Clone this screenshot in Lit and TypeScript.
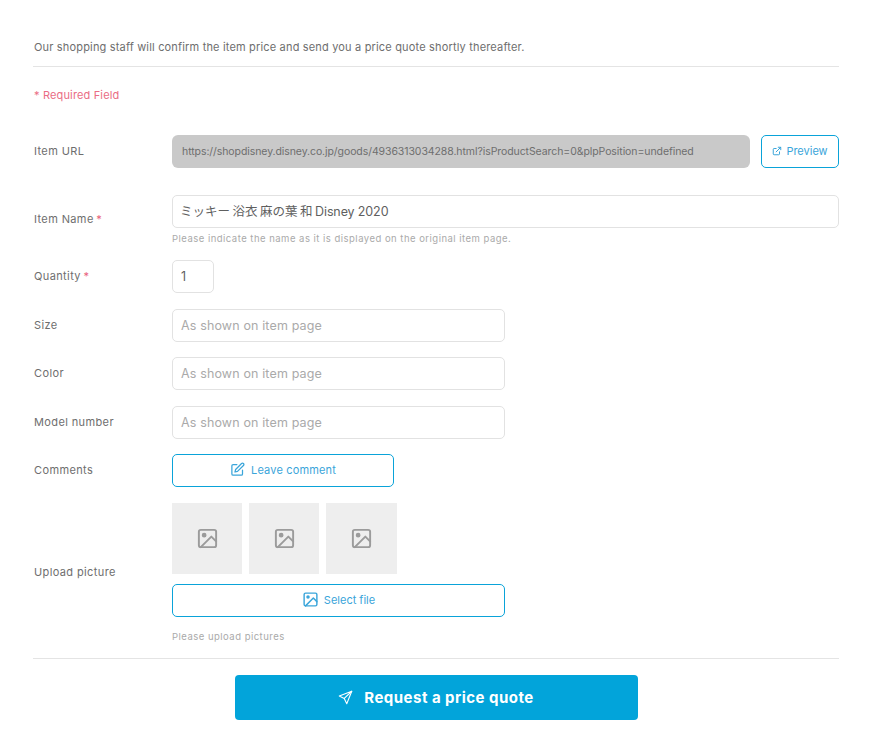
import { LitElement, html, css } from "lit";
import { customElement } from "lit/decorators.js";

const imageIcon = (size: number) => html`<svg width=${size} height=${size} viewBox="0 0 24 24" fill="none" stroke="currentColor" stroke-width="2" stroke-linecap="round" stroke-linejoin="round"><rect x="3" y="3" width="18" height="18" rx="2"></rect><circle cx="8.5" cy="8.5" r="1.5" fill="currentColor"></circle><path d="M21 15l-5-5L5 21"></path></svg>`;

@customElement("app-root")
export class AppRoot extends LitElement {
  static styles = css`
    :host {
      display: block;
      box-sizing: border-box;
      width: 875px;
      height: 751px;
      padding: 39px 36px 0 33px;
      background: #fff;
      font-family: Inter, "Noto Sans CJK JP", sans-serif;
      color: #666;
      overflow: hidden;
    }
    * { box-sizing: border-box; }
    .intro { font-size: 11px; line-height: 16px; letter-spacing: 0.17px; height: 27px; color: #6e6e6e; padding-left: 1px; }
    hr { border: 0; border-top: 1px solid #e4e4e4; margin: 0; }
    .req { margin-top: 20px; height: 16px; padding-left: 1px; font-size: 11px; line-height: 16px; letter-spacing: 0.15px; color: #ea6c84; }
    .row { display: grid; grid-template-columns: 139px 1fr; align-items: center; }
    .label { font-size: 11px; line-height: 16px; letter-spacing: 0.38px; color: #6e6e6e; padding-left: 1px; margin-top: -2px; }
    .star { color: #e8607a; margin-left: -1px; }
    .field {
      height: 33px; border: 1px solid #e2e2e2; border-radius: 5px; padding: 0 8px;
      font-size: 12.5px; line-height: 31px; color: #5f5f5f; background: #fff; white-space: nowrap;
    }
    .named { padding-left: 7px; }
    .cjk { word-spacing: -1px; }
    .latin { letter-spacing: -0.12px; }
    .ph { color: #aaa; letter-spacing: 0.14px; }
    .short { width: 333px; }
    .url-row { margin-top: 32px; }
    .url-line { display: flex; gap: 11px; }
    .url {
      flex: 1; height: 33px; background: #c9c9c9; border-radius: 6px; padding: 0 10px;
      font-size: 10.5px; line-height: 33px; color: #6e6e6e; white-space: nowrap; overflow: hidden; letter-spacing: -0.08px;
    }
    .btn {
      display: flex; align-items: center; justify-content: center; gap: 5px; height: 33px;
      border: 1px solid #0aa3d9; border-radius: 5px; background: #fff; color: #3aa5da; font-size: 11px; font-family: inherit; padding: 0 0 2px;
    }
    .preview { width: 78px; gap: 4px; }
    .comment { width: 222px; gap: 6px; letter-spacing: 0.15px; }
    .select { width: 333px; gap: 5px; margin-top: 10px; }
    .hint { font-size: 9.5px; line-height: 12px; color: #aaa; letter-spacing: 0.48px; }
    .name-row { margin-top: 27px; }
    .name-row .hint { margin-top: 5px; height: 12px; }
    .qty-row { margin-top: 15px; }
    .qty { width: 42px; }
    .size-row { margin-top: 16px; }
    .color-row { margin-top: 15px; }
    .model-row { margin-top: 16px; }
    .comment-row { margin-top: 15px; }
    .upload-row { margin-top: 16px; }
    .thumbs { display: flex; gap: 7px; }
    .thumb { width: 70px; height: 71px; background: #eee; color: #9b9b9b; display: flex; align-items: center; justify-content: center; }
    .thumb:last-child { width: 71px; }
    .upload-row .hint { margin-top: 14px; height: 12px; }
    .end { margin-top: 15px; }
    .submit-wrap { display: flex; justify-content: center; margin-top: 16px; }
    .submit {
      width: 403px; height: 45px; border: 0; border-radius: 4px; background: #02a4da; color: #fff;
      font-family: inherit; font-size: 15px; font-weight: 700; letter-spacing: 0.48px;
      display: flex; align-items: center; justify-content: center; gap: 11px; padding: 0;
    }
  `;

  render() {
    const ph = "As shown on item page";
    return html`
      <div class="intro">Our shopping staff will confirm the item price and send you a price quote shortly thereafter.</div>
      <hr />
      <div class="req">* Required Field</div>

      <div class="row url-row">
        <div class="label">Item URL</div>
        <div class="url-line">
          <div class="url">https://shopdisney.disney.co.jp/goods/4936313034288.html?isProductSearch=0&plpPosition=undefined</div>
          <button class="btn preview">
            <svg width="10" height="10" viewBox="0 0 24 24" fill="none" stroke="currentColor" stroke-width="2.4" stroke-linecap="round" stroke-linejoin="round"><path d="M18 14v5a2 2 0 0 1-2 2H5a2 2 0 0 1-2-2V8a2 2 0 0 1 2-2h5"></path><path d="M15 3h6v6"></path><path d="M10 14L21 3"></path></svg>
            Preview
          </button>
        </div>
      </div>

      <div class="row name-row">
        <div class="label">Item Name <span class="star">*</span></div>
        <div>
          <div class="field named"><span class="cjk">ミッキー 浴衣 麻の葉 和 </span><span class="latin">Disney 2020</span></div>
          <div class="hint">Please indicate the name as it is displayed on the original item page.</div>
        </div>
      </div>

      <div class="row qty-row">
        <div class="label">Quantity <span class="star">*</span></div>
        <div class="field qty">1</div>
      </div>

      <div class="row size-row">
        <div class="label">Size</div>
        <div class="field short ph">${ph}</div>
      </div>
      <div class="row color-row">
        <div class="label">Color</div>
        <div class="field short ph">${ph}</div>
      </div>
      <div class="row model-row">
        <div class="label">Model number</div>
        <div class="field short ph">${ph}</div>
      </div>

      <div class="row comment-row">
        <div class="label">Comments</div>
        <button class="btn comment">
          <svg width="15" height="15" viewBox="0 0 24 24" fill="none" stroke="currentColor" stroke-width="2" stroke-linecap="round" stroke-linejoin="round"><path d="M11 4H5a2 2 0 0 0-2 2v13a2 2 0 0 0 2 2h13a2 2 0 0 0 2-2v-6"></path><path d="M18.5 2.5a2.1 2.1 0 0 1 3 3L12 15l-4 1 1-4z"></path></svg>
          Leave comment
        </button>
      </div>

      <div class="row upload-row">
        <div class="label">Upload picture</div>
        <div>
          <div class="thumbs">
            <div class="thumb">${imageIcon(23)}</div>
            <div class="thumb">${imageIcon(23)}</div>
            <div class="thumb">${imageIcon(23)}</div>
          </div>
          <button class="btn select">${imageIcon(17)} Select file</button>
          <div class="hint">Please upload pictures</div>
        </div>
      </div>

      <hr class="end" />
      <div class="submit-wrap">
        <button class="submit">
          <svg width="15" height="15" viewBox="0 0 24 24" fill="none" stroke="currentColor" stroke-width="1.7" stroke-linecap="round" stroke-linejoin="round"><path d="M22 2L2 9.5l8 4 4 8.5z"></path><path d="M22 2L10 13.5"></path></svg>
          Request a price quote
        </button>
      </div>
    `;
  }
}
